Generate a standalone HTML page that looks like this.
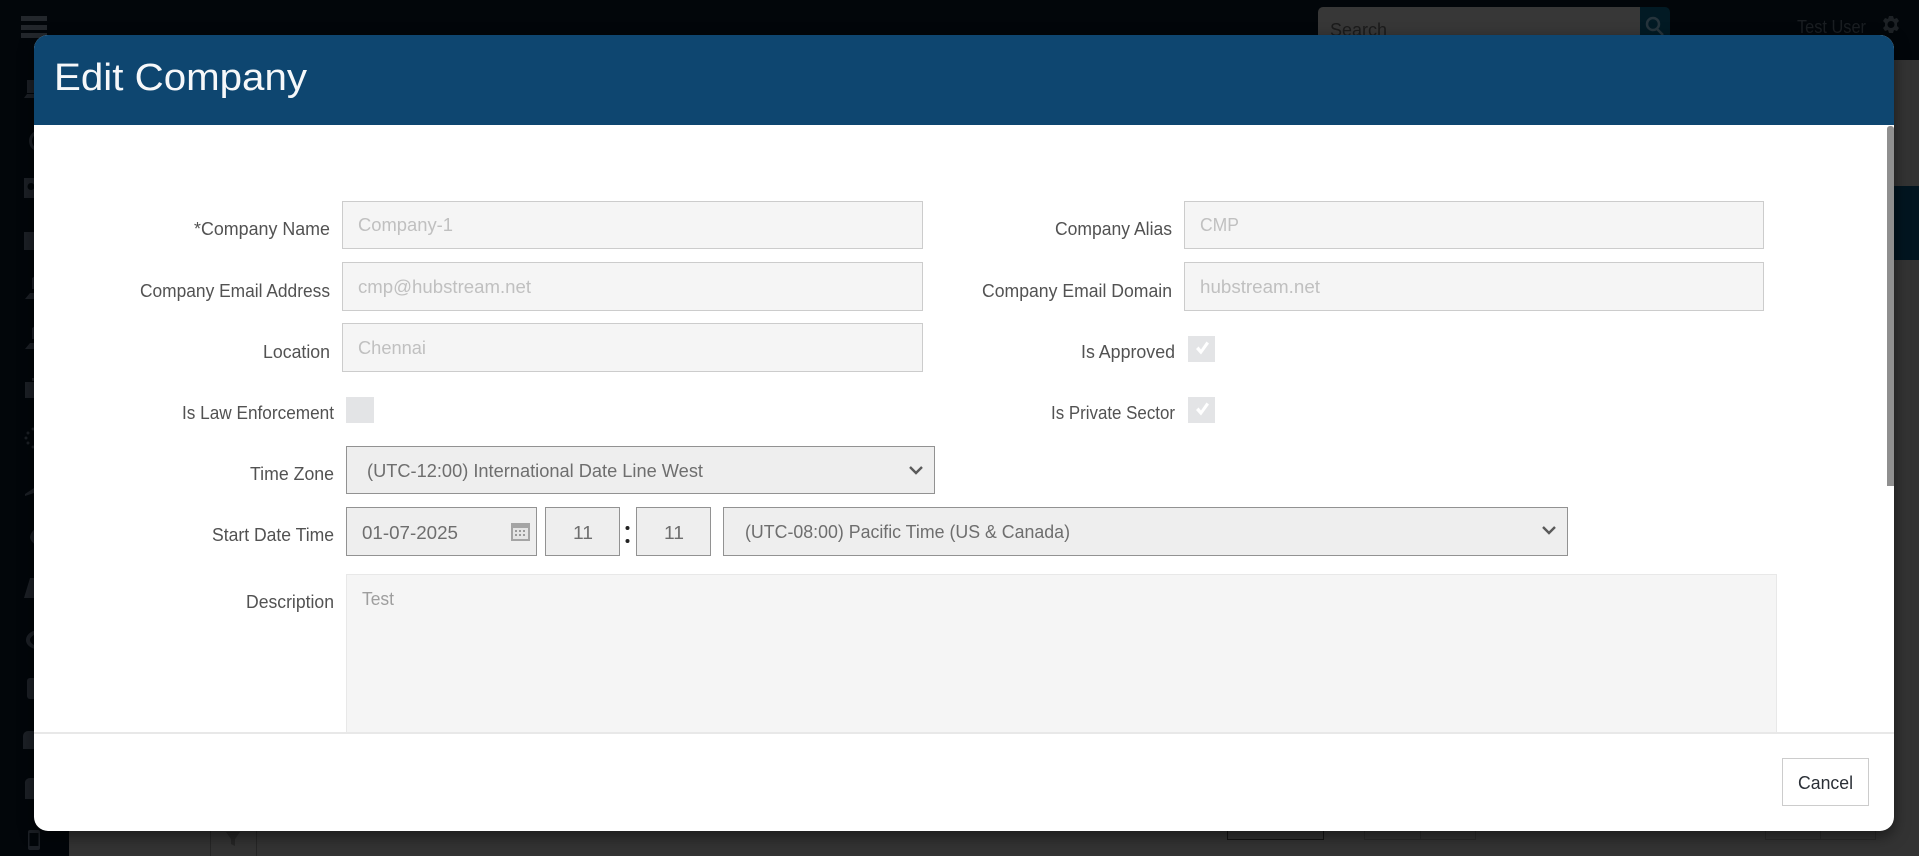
<!DOCTYPE html>
<html lang="en">
<head>
<meta charset="utf-8">
<title>Edit Company</title>
<style>
html,body{margin:0;padding:0;width:1919px;height:856px;overflow:hidden;background:#333}
.b{position:absolute;box-sizing:border-box}
.inp{background:#f5f5f5;border:1.5px solid #cccccc}
.sel{background:#eee;border:1.5px solid #929292}
.chk{background:#e3e4e6}
svg{position:absolute;left:0;top:0}
text{font-family:"Liberation Sans",sans-serif}
.l{font-size:18px;fill:#525252}
.v{font-size:18px;fill:#c0c0c0}
.s{font-size:18px;fill:#6e6e6e}
</style>
</head>
<body>
<!-- dimmed background page -->
<div class="b" style="left:0;top:0;width:1919px;height:60px;background:#02060a"></div>
<div class="b" style="left:0;top:0;width:69px;height:856px;background:#02060a"></div>
<div class="b" style="left:1894px;top:186px;width:25px;height:74px;background:#021520"></div>
<div class="b" style="left:1318px;top:7px;width:323px;height:45px;background:#373737;border-radius:5px 0 0 5px"></div>
<div class="b" style="left:1640px;top:7px;width:30px;height:45px;background:#021a24;border-radius:0 5px 5px 0"></div>
<div class="b" style="left:210px;top:825px;width:47px;height:31px;border-left:1px solid #262626;border-right:1px solid #262626"></div>
<div class="b" style="left:1227px;top:820px;width:97px;height:20px;border:1px solid #141414"></div>
<div class="b" style="left:1364px;top:820px;width:57px;height:20px;border:1px solid #2a2a2a"></div>
<div class="b" style="left:1420px;top:820px;width:56px;height:20px;border:1px solid #2a2a2a"></div>
<div class="b" style="left:1765px;top:820px;width:56px;height:20px;border:1px solid #2a2a2a"></div>
<div class="b" style="left:1820px;top:820px;width:56px;height:20px;border:1px solid #2a2a2a"></div>

<svg width="1919" height="856" viewBox="0 0 1919 856" xmlns="http://www.w3.org/2000/svg">
  <g fill="#23272c">
    <rect x="21" y="16" width="26" height="5"/><rect x="21" y="25" width="26" height="5"/><rect x="21" y="33" width="26" height="5"/>
  </g>
  <g fill="#1c2026">
    <path d="M27 80h18v13H27zM24 98l3-4h18v4z"/>
    <path d="M40 130a11 11 0 1 0 0 22v-3a8 8 0 1 1 0-16zM36 136h4v9h-4z"/>
    <path d="M24 178h16v20H24zM31 183a3 3 0 1 0 0 7a3 3 0 0 0 0-7z"/>
    <path d="M24 232h16v18H24z"/>
    <path d="M32 278a6 6 0 0 1 8 0v11h-8zM25 299l5-6h10v6z"/>
    <path d="M32 328a6 6 0 0 1 8 0v11h-8zM25 349l5-6h10v6z"/>
    <path d="M25 382h15v16H25zM32 378h8v3h-8z"/>
    <circle cx="33" cy="429" r="1.5"/><circle cx="28" cy="433" r="1.5"/><circle cx="26" cy="438" r="1.5"/><circle cx="28" cy="443" r="1.5"/><circle cx="33" cy="447" r="1.5"/>
    <path d="M34 480v8l-9 6v2l9-3v7h6v-20z"/>
    <path d="M40 527a12 12 0 0 0-10 10c0 4 5 8 10 11v-8a4 4 0 0 1 0-7z"/>
    <path d="M24 598l6-20h10v20z"/>
    <path d="M40 630a13 10 0 0 0-14 10c0 5 5 9 14 10v-3c-6-1-10-4-10-7c0-3 4-6 10-7z"/>
    <path d="M27 681a3 3 0 0 1 3-3h10v21H30a3 3 0 0 1-3-3z"/>
    <path d="M23 736a5 5 0 0 1 5-5h12v18H23z"/>
    <path d="M25 784a5 5 0 0 1 5-6h10v21H25z"/>
    <path fill-rule="evenodd" d="M30 830h8a2 2 0 0 1 2 2v16a2 2 0 0 1-2 2h-8a2 2 0 0 1-2-2v-16a2 2 0 0 1 2-2zM29.500 833v13h9v-13z"/>
    <path d="M226 832h14l-5 7v7l-4-2v-5z" fill="#262626"/>
  </g>
  <text x="1330" y="36" font-size="18" fill="#1b1b1b" textLength="57" lengthAdjust="spacingAndGlyphs">Search</text>
  <text x="1797" y="33" font-size="18" fill="#1a1e22" textLength="69" lengthAdjust="spacingAndGlyphs">Test User</text>
  <g fill="none" stroke="#26343c" stroke-width="2.500"><circle cx="1653" cy="24" r="6"/><path d="M1657 29l6 6"/></g>
  <path fill="#1d2125" fill-rule="evenodd" d="M1889 16h4l1 3 3-1 2 3-2 2v3l2 2-2 3-3-1-1 3h-4l-1-3-3 1-2-3 2-2v-3l-2-2 2-3 3 1zM1891 21a3.500 3.500 0 1 0 0 7a3.500 3.500 0 0 0 0-7z"/>
</svg>

<!-- modal -->
<div class="b" style="left:34px;top:35px;width:1860px;height:796px;background:#fff;border-radius:14px;box-shadow:0 5px 15px rgba(0,0,0,.5)"></div>
<div class="b" style="left:34px;top:35px;width:1860px;height:90px;background:#0e4670;border-radius:14px 14px 0 0"></div>
<div class="b" style="left:1887px;top:126px;width:7px;height:360px;background:#8f8f8f;border-radius:3px 3px 0 0"></div>

<div class="b inp" style="left:342px;top:201px;width:581px;height:48px"></div>
<div class="b inp" style="left:342px;top:262px;width:581px;height:49px"></div>
<div class="b inp" style="left:342px;top:323px;width:581px;height:49px"></div>
<div class="b inp" style="left:1184px;top:201px;width:580px;height:48px"></div>
<div class="b inp" style="left:1184px;top:262px;width:580px;height:49px"></div>
<div class="b chk" style="left:1188px;top:336px;width:27px;height:26px"></div>
<div class="b chk" style="left:1188px;top:397px;width:27px;height:26px"></div>
<div class="b chk" style="left:346px;top:397px;width:28px;height:26px"></div>
<div class="b sel" style="left:346px;top:446px;width:589px;height:48px"></div>
<div class="b sel" style="left:346px;top:507px;width:191px;height:49px"></div>
<div class="b sel" style="left:545px;top:507px;width:75px;height:49px"></div>
<div class="b sel" style="left:636px;top:507px;width:75px;height:49px"></div>
<div class="b sel" style="left:723px;top:507px;width:845px;height:49px"></div>
<div class="b" style="left:346px;top:574px;width:1431px;height:158px;background:#f5f5f5;border:1.500px solid #e8e8e8;border-bottom:0"></div>
<div class="b" style="left:34px;top:732px;width:1860px;height:1.500px;background:#e8e8e8"></div>
<div class="b" style="left:1782px;top:758px;width:87px;height:48px;background:#fff;border:1.500px solid #cccccc"></div>

<svg width="1919" height="856" viewBox="0 0 1919 856" xmlns="http://www.w3.org/2000/svg">
  <text x="54" y="90" font-size="38" fill="#f6f8fa" textLength="253" lengthAdjust="spacingAndGlyphs">Edit Company</text>

  <text class="l" x="194" y="235" textLength="136" lengthAdjust="spacingAndGlyphs">*Company Name</text>
  <text class="l" x="140" y="297" textLength="190" lengthAdjust="spacingAndGlyphs">Company Email Address</text>
  <text class="l" x="263" y="358" textLength="67" lengthAdjust="spacingAndGlyphs">Location</text>
  <text class="l" x="182" y="419" textLength="152" lengthAdjust="spacingAndGlyphs">Is Law Enforcement</text>
  <text class="l" x="250" y="480" textLength="84" lengthAdjust="spacingAndGlyphs">Time Zone</text>
  <text class="l" x="212" y="541" textLength="122" lengthAdjust="spacingAndGlyphs">Start Date Time</text>
  <text class="l" x="246" y="608" textLength="88" lengthAdjust="spacingAndGlyphs">Description</text>

  <text class="l" x="1055" y="235" textLength="117" lengthAdjust="spacingAndGlyphs">Company Alias</text>
  <text class="l" x="982" y="297" textLength="190" lengthAdjust="spacingAndGlyphs">Company Email Domain</text>
  <text class="l" x="1081" y="358" textLength="94" lengthAdjust="spacingAndGlyphs">Is Approved</text>
  <text class="l" x="1051" y="419" textLength="124" lengthAdjust="spacingAndGlyphs">Is Private Sector</text>

  <text class="v" x="358" y="231" textLength="95" lengthAdjust="spacingAndGlyphs">Company-1</text>
  <text class="v" x="358" y="293" textLength="173" lengthAdjust="spacingAndGlyphs">cmp@hubstream.net</text>
  <text class="v" x="358" y="354" textLength="68" lengthAdjust="spacingAndGlyphs">Chennai</text>
  <text class="v" x="1200" y="231" textLength="39" lengthAdjust="spacingAndGlyphs">CMP</text>
  <text class="v" x="1200" y="293" textLength="120" lengthAdjust="spacingAndGlyphs">hubstream.net</text>

  <text class="s" x="367" y="477" textLength="336" lengthAdjust="spacingAndGlyphs">(UTC-12:00) International Date Line West</text>
  <text class="s" x="362" y="539" textLength="96" lengthAdjust="spacingAndGlyphs">01-07-2025</text>
  <text class="s" x="573" y="539" textLength="20" lengthAdjust="spacingAndGlyphs">11</text>
  <text class="s" x="664" y="539" textLength="20" lengthAdjust="spacingAndGlyphs">11</text>
  <text class="s" x="745" y="538" textLength="325" lengthAdjust="spacingAndGlyphs">(UTC-08:00) Pacific Time (US &amp; Canada)</text>
  <text x="362" y="605" font-size="18" fill="#9e9e9e" textLength="32" lengthAdjust="spacingAndGlyphs">Test</text>
  <text x="1798" y="789" font-size="18" fill="#2a2f36" textLength="55" lengthAdjust="spacingAndGlyphs">Cancel</text>

  <g fill="none" stroke="#5a5a5a" stroke-width="2.400">
    <path d="M910 467l6 6 6-6"/>
    <path d="M1543 527l6 6 6-6"/>
  </g>
  <g fill="#222"><circle cx="627.500" cy="528" r="2"/><circle cx="627.500" cy="541" r="2"/></g>

  <g fill="#fff">
    <path d="M1196 349l2.500-2.500 2.500 3 5.500-8 2.500 2-8 11z"/>
    <path d="M1196 410l2.500-2.500 2.500 3 5.500-8 2.500 2-8 11z"/>
  </g>

  <g>
    <rect x="511" y="523" width="19" height="18" fill="#a4a4a4"/>
    <rect x="513" y="528" width="15" height="11" fill="#e4e4e4"/>
    <g fill="#9a9a9a">
      <rect x="515" y="530" width="2" height="2"/><rect x="519" y="530" width="2" height="2"/><rect x="523" y="530" width="2" height="2"/>
      <rect x="515" y="534" width="2" height="2"/><rect x="519" y="534" width="2" height="2"/><rect x="523" y="534" width="2" height="2"/>
    </g>
  </g>
</svg>
</body>
</html>
